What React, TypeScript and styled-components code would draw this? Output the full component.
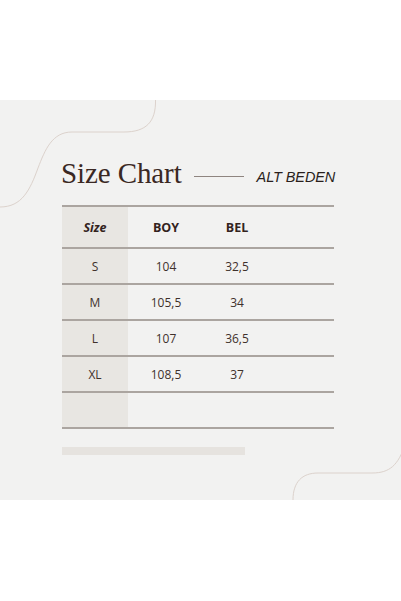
import React from "react";
import styled, { createGlobalStyle } from "styled-components";

const Global = createGlobalStyle`
  html, body { margin: 0; padding: 0; background: #ffffff; }
  body { width: 401px; height: 601px; overflow: hidden; }
`;

const Page = styled.div`
  width: 401px;
  height: 601px;
  padding-top: 100px;
  box-sizing: border-box;
  background: #ffffff;
`;

const Panel = styled.section`
  position: relative;
  width: 401px;
  height: 400px;
  background: #f2f2f1;
  box-sizing: border-box;
  padding: 59px 0 0 61px;
  display: flex;
  flex-direction: column;
  overflow: hidden;
`;

const Deco = styled.svg`
  position: absolute;
  left: 0;
  top: 0;
  pointer-events: none;
`;

const TitleRow = styled.div`
  display: flex;
  align-items: center;
  height: 29px;
`;

const Title = styled.h1`
  margin: 0;
  font-family: "Liberation Serif", "DejaVu Serif", serif;
  font-weight: 400;
  font-size: 29px;
  line-height: 1;
  color: #3a2823;
  letter-spacing: -0.1px;
`;

const Rule = styled.span`
  display: block;
  width: 50px;
  height: 1px;
  margin: 5px 13px 0 12px;
  background: #8f8580;
`;

const Subtitle = styled.span`
  margin-top: 7px;
  font-family: "Liberation Sans", Arial, sans-serif;
  font-style: italic;
  font-size: 14.5px;
  line-height: 1;
  color: #2a1f1c;
  letter-spacing: -0.1px;
`;

const Table = styled.div`
  margin-top: 17px;
  margin-left: 1px;
  width: 272px;
  border-top: 2px solid #aba5a0;
`;

const Row = styled.div<{ $head?: boolean }>`
  display: grid;
  grid-template-columns: 66px 76px 66px 1fr;
  height: ${(p) => (p.$head ? 40 : 34)}px;
  border-bottom: 2px solid #aba5a0;
`;

const Cell = styled.div<{ $shade?: boolean; $head?: boolean; $italic?: boolean }>`
  display: flex;
  align-items: center;
  justify-content: center;
  background: ${(p) => (p.$shade ? "#e8e6e2" : "transparent")};
  font-family: "Open Sans", "Liberation Sans", sans-serif;
  font-size: ${(p) => (p.$head ? 12.5 : 12)}px;
  font-weight: ${(p) => (p.$head ? 700 : 400)};
  font-style: ${(p) => (p.$italic ? "italic" : "normal")};
  color: ${(p) => (p.$head ? "#33231d" : "#3f312c")};
`;

const Bar = styled.div`
  margin-top: 18px;
  margin-left: 1px;
  width: 183px;
  height: 8px;
  background: #e6e3df;
`;

const rows: [string, string, string][] = [
  ["S", "104", "32,5"],
  ["M", "105,5", "34"],
  ["L", "107", "36,5"],
  ["XL", "108,5", "37"],
  ["", "", ""],
];

export default function App() {
  return (
    <Page>
      <Global />
      <Panel>
        <Deco width="401" height="400" viewBox="0 0 401 400">
          <path
            d="M155.5 0 C156 22 146 32 124 32 L72 32 C52 32 45 50 38 68 C30 90 22 107 0 107"
            fill="none"
            stroke="#dcd2cc"
            strokeWidth="1"
          />
          <path
            d="M405 345 C398 365 390 373 372 373 L318 373 C302 373 293 382 293 400"
            fill="none"
            stroke="#dcd2cc"
            strokeWidth="1"
          />
        </Deco>
        <TitleRow>
          <Title>Size Chart</Title>
          <Rule />
          <Subtitle>ALT BEDEN</Subtitle>
        </TitleRow>
        <Table>
          <Row $head>
            <Cell $shade $head $italic>Size</Cell>
            <Cell $head>BOY</Cell>
            <Cell $head>BEL</Cell>
            <Cell />
          </Row>
          {rows.map((r, i) => (
            <Row key={i}>
              <Cell $shade>{r[0]}</Cell>
              <Cell>{r[1]}</Cell>
              <Cell>{r[2]}</Cell>
              <Cell />
            </Row>
          ))}
        </Table>
        <Bar />
      </Panel>
    </Page>
  );
}
